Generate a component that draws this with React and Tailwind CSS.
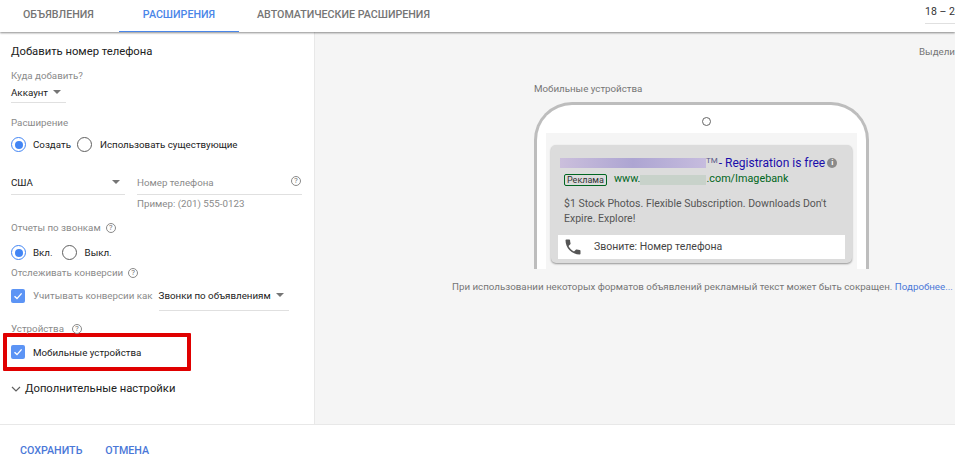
const font = { fontFamily: "Roboto, sans-serif" };

function Help({ className = "" }) {
  return (
    <span className={`inline-flex items-center justify-center w-[10px] h-[10px] rounded-full border border-[#8a8a8a] text-[8px] leading-none text-[#757575] ${className}`}>
      ?
    </span>
  );
}

function Caret({ className = "" }) {
  return <span className={`inline-block w-0 h-0 border-x-[4.5px] border-x-transparent border-t-[4.5px] border-t-[#757575] ${className}`} />;
}

function Radio({ checked }) {
  return (
    <span className={`flex items-center justify-center w-[15px] h-[15px] rounded-full border-[1.5px] bg-white shrink-0 ${checked ? "border-[#4285f4]" : "border-[#5f5f5f]"}`}>
      {checked && <span className="w-[8px] h-[8px] rounded-full bg-[#4285f4]" />}
    </span>
  );
}

function Check() {
  return (
    <span className="flex items-center justify-center w-[14px] h-[14px] rounded-[2px] bg-[#5c94f5] shrink-0">
      <svg width="10" height="10" viewBox="0 0 10 10" fill="none">
        <path d="M1.5 5.2 L4 7.6 L8.6 2.4" stroke="#fff" strokeWidth="1.4" />
      </svg>
    </span>
  );
}

export default function App() {
  return (
    <div className="w-full h-[467px] bg-white flex flex-col overflow-hidden" style={font}>
      {/* Tabs */}
      <div className="relative z-10 h-[32px] shrink-0 flex justify-between bg-white shadow-[0_1px_2px_rgba(0,0,0,0.45)]">
        <div className="flex text-[10.7px] font-medium">
          <div className="w-[119px] pl-[23px] pt-[7px] text-[#757575]">ОБЪЯВЛЕНИЯ</div>
          <div className="w-[120px] pt-[7px] text-center text-[#4a86e8] border-b border-[#4a86e8] h-[32px]">РАСШИРЕНИЯ</div>
          <div className="pl-[18px] pt-[7px] text-[#757575]">АВТОМАТИЧЕСКИЕ РАСШИРЕНИЯ</div>
        </div>
        <div className="w-[30px] h-[24px] pt-[5px] text-[10.5px] leading-[13px] text-[#333] border-b border-[#e0e0e0] whitespace-nowrap">
          18 – 24
        </div>
      </div>

      <div className="flex flex-1 min-h-0">
        {/* Form */}
        <div className="w-[315px] shrink-0 border-r border-[#e8e8e8] pl-[11px] pr-[12px] pt-[12px]">
          <div className="text-[11.25px] leading-[15px] text-[#212121]">Добавить номер телефона</div>

          <div className="mt-[10px] text-[9.75px] leading-[13px] text-[#8a8a8a]">Куда добавить?</div>
          <div className="mt-[4px] w-[55px] h-[17px] border-b border-[#e0e0e0] flex items-start gap-[5px] text-[9.75px] leading-[13px] text-[#212121]">
            Аккаунт <Caret className="mt-[4px]" />
          </div>

          <div className="mt-[13px] text-[9.75px] leading-[13px] text-[#8a8a8a]">Расширение</div>
          <div className="mt-[8px] flex items-center text-[9.75px] text-[#212121] leading-[15px]">
            <Radio checked />
            <span className="ml-[7px]">Создать</span>
            <span className="ml-[6px]"><Radio /></span>
            <span className="ml-[8px]">Использовать существующие</span>
          </div>

          <div className="mt-[24px] flex">
            <div className="w-[114px] h-[19px] border-b border-[#e0e0e0] flex justify-between pr-[5px] text-[9.75px] leading-[13px] text-[#212121]">
              США <Caret className="mt-[4px]" />
            </div>
            <div className="ml-[12px] w-[165px] h-[19px] border-b border-[#e0e0e0] flex justify-between text-[9.75px] leading-[13px] text-[#8a8a8a]">
              Номер телефона <Help className="mr-[1px]" />
            </div>
          </div>
          <div className="mt-[2px] ml-[126px] text-[9.75px] leading-[13px] text-[#8a8a8a]">Пример: (201) 555-0123</div>

          <div className="mt-[11px] flex items-center gap-[5px] text-[9.75px] leading-[13px] text-[#8a8a8a]">
            Отчеты по звонкам <Help />
          </div>
          <div className="mt-[11px] flex items-center text-[9.75px] leading-[15px] text-[#212121]">
            <Radio checked />
            <span className="ml-[7px]">Вкл.</span>
            <span className="ml-[9px]"><Radio /></span>
            <span className="ml-[8px]">Выкл.</span>
          </div>
          <div className="mt-[6px] flex items-center gap-[5px] text-[9.75px] leading-[13px] text-[#8a8a8a]">
            Отслеживать конверсии <Help />
          </div>

          <div className="mt-[2px] flex items-start">
            <span className="mt-[8px]"><Check /></span>
            <span className="ml-[8px] mt-[8px] text-[9.75px] leading-[13px] text-[#8a8a8a] whitespace-nowrap">Учитывать конверсии как</span>
            <div className="ml-[6px] w-[130px] h-[30px] pt-[8px] border-b border-[#e0e0e0] flex gap-[5px] text-[9.75px] leading-[13px] text-[#212121] whitespace-nowrap">
              Звонки по объявлениям <Caret className="mt-[4px]" />
            </div>
          </div>

          <div className="mt-[11px] flex items-center gap-[8px] text-[9.75px] leading-[13px] text-[#8a8a8a]">
            Устройства <Help />
          </div>
          {/* Red highlight */}
          <div className="mt-[-2px] ml-[-8px] w-[188px] h-[38px] border-[4px] border-[#e00000] rounded-[1px] flex items-center pl-[4px] text-[9.75px] leading-[13px] text-[#212121]">
            <Check />
            <span className="ml-[8px]">Мобильные устройства</span>
          </div>

          <div className="mt-[10px] flex items-center gap-[4px] text-[11.25px] leading-[15px] text-[#212121]">
            <svg width="10" height="6" viewBox="0 0 10 6" fill="none">
              <path d="M1 1 L5 5 L9 1" stroke="#616161" strokeWidth="1.2" />
            </svg>
            Дополнительные настройки
          </div>
        </div>

        {/* Preview */}
        <div className="flex-1 min-w-0 bg-[#f5f5f5] overflow-hidden">
          <div className="ml-[604px] mt-[13px] text-[9.75px] leading-[13px] text-[#757575] whitespace-nowrap">Выделить</div>
          <div className="ml-[219px] mt-[24px] text-[9.75px] leading-[13px] text-[#757575]">Мобильные устройства</div>
          <div className="ml-[219px] mt-[7px] w-[335px] h-[167px] border-x-[3px] border-t-[3px] border-[#bdbdbd] rounded-t-[38px] bg-white pt-[12px] box-border">
            <div className="ml-[165px] w-[9px] h-[9px] rounded-full border border-[#666] bg-white" />
            <div className="mt-[7px] mx-[9px] h-[136px] bg-[#f5f5f5] pt-[12px] px-[5px]">
              <div className="h-[118px] rounded-[5px] bg-[#dcdcdc] shadow-[0_1px_2px_rgba(0,0,0,0.4)] px-[13px] pt-[10px]">
                <div className="flex items-center h-[16px] text-[12px] leading-[16px] text-[#1a0dab] whitespace-nowrap">
                  <span className="w-[146px] shrink-0 ml-[-4px] h-[10px] bg-gradient-to-r from-[#cbbfdc] via-[#ada5d2] to-[#c6bcde]" />
                  <span className="text-[8px] mb-1 text-[#5a5a8a]">TM</span>
                  <span className="ml-[1px]">- Registration is free</span>
                  <span className="ml-[2px] w-[10px] h-[10px] rounded-full bg-[#8a8a8a] text-white text-[8px] leading-[10px] text-center font-bold">i</span>
                </div>
                <div className="mt-[1px] flex items-center h-[15px] text-[10.8px] text-[#006621] whitespace-nowrap">
                  <span className="flex items-center h-[12px] px-[2px] border border-[#006621] rounded-[2px] text-[9px] leading-[10px] text-[#333]">Реклама</span>
                  <span className="ml-[7px]">www.</span>
                  <span className="w-[66px] h-[10px] bg-[#c8d2ca]" />
                  <span>.com/Imagebank</span>
                </div>
                <div className="mt-[9px] text-[10.5px] leading-[15px] text-[#555] w-[280px]">
                  $1 Stock Photos. Flexible Subscription. Downloads Don't Expire. Explore!
                </div>
                <div className="mt-[9px] ml-[-6px] w-[287px] h-[24px] bg-white flex items-center text-[10.5px] text-[#444]">
                  <svg width="20" height="20" viewBox="0 0 24 24" fill="#555" className="ml-[5px] shrink-0">
                    <path d="M6.62 10.79c1.44 2.83 3.76 5.14 6.59 6.59l2.2-2.2c.27-.27.67-.36 1.02-.24 1.12.37 2.33.57 3.57.57.55 0 1 .45 1 1V20c0 .55-.45 1-1 1-9.39 0-17-7.61-17-17 0-.55.45-1 1-1h3.5c.55 0 1 .45 1 1 0 1.25.2 2.45.57 3.57.11.35.03.74-.25 1.02l-2.2 2.2z" />
                  </svg>
                  <span className="ml-[11px]">Звоните: Номер телефона</span>
                </div>
              </div>
            </div>
          </div>
          <div className="ml-[137px] mt-[11px] text-[9.75px] leading-[13px] text-[#757575] whitespace-nowrap">
            При использовании некоторых форматов объявлений рекламный текст может быть сокращен. <span className="text-[#4a78d8]">Подробнее...</span>
          </div>
        </div>
      </div>

      {/* Footer */}
      <div className="h-[43px] shrink-0 border-t border-[#e8e8e8] bg-white pl-[20px] pt-[19px] flex gap-[23px] text-[10.7px] leading-[14px] font-medium text-[#4a78d8]">
        <span>СОХРАНИТЬ</span>
        <span>ОТМЕНА</span>
      </div>
    </div>
  );
}
